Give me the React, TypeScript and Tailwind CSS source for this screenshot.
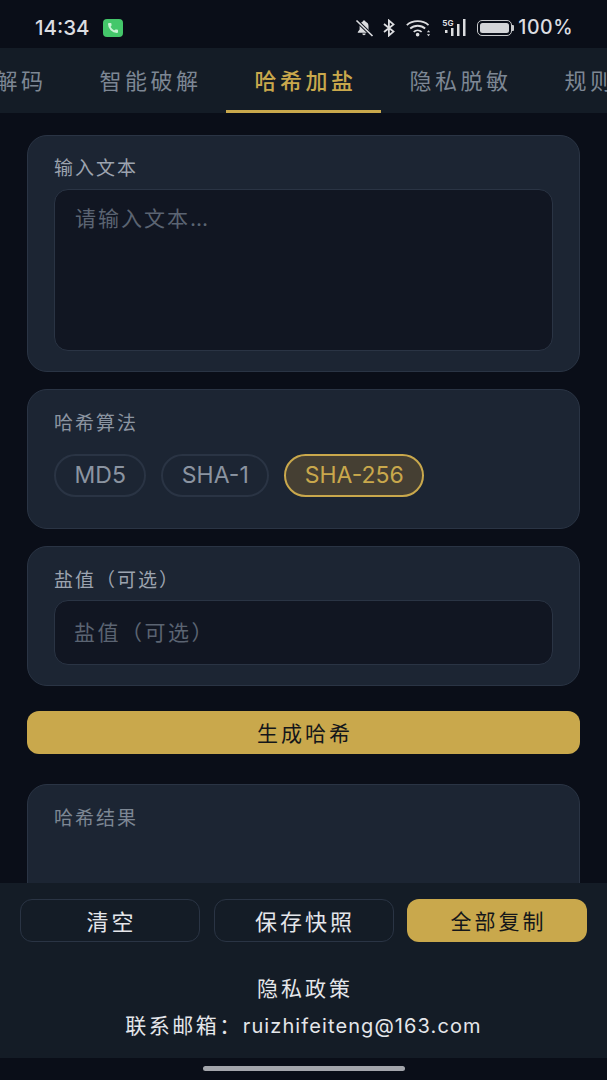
import { Phone } from 'lucide-react';

const FONT = "font-['Inter','Noto_Sans_CJK_SC',sans-serif]";

const tabs = ['编码解码', '智能破解', '哈希加盐', '隐私脱敏', '规则管理'];
const algorithms = ['MD5', 'SHA-1', 'SHA-256'];

function StatusBar() {
  return (
    <div className="h-[48px] shrink-0 flex items-center justify-between pl-[35px] pr-[34px] pt-[8px] text-[#dcdde0]">
      <div className="flex items-center gap-[14px]">
        <span className="text-[20.500px] font-medium leading-none">14:34</span>
        <span className="w-[20px] h-[18px] rounded-[4px] bg-[#44c76a] flex items-center justify-center">
          <Phone size={12} className="text-[#c9f2d4]" fill="currentColor" strokeWidth={0} />
        </span>
      </div>
      <div className="flex items-center">
        {/* muted bell */}
        <svg width="19" height="18" viewBox="0 0 19 18" className="mr-[8px]">
          <path d="M9 1.500c-.8 0-1.300.5-1.400 1.200C5.600 3.300 4.600 5 4.600 7v3.400L2.800 13v.8h12.400V13l-1.700-2.600V7c0-2-1-3.700-2.900-4.300C10.400 2 9.800 1.500 9 1.500zM7.300 14.600c.1 1 .8 1.700 1.700 1.700s1.600-.7 1.700-1.700z" fill="#dcdde0" />
          <path d="M1.500 1.500 17.500 17" stroke="#0a0e18" strokeWidth="3.500" />
          <path d="M1.500 1.500 17.500 17" stroke="#dcdde0" strokeWidth="1.700" />
        </svg>
        {/* bluetooth */}
        <svg width="14" height="18" viewBox="0 0 13 18" className="mr-[9px]" fill="none" stroke="#dcdde0" strokeWidth="1.800">
          <path d="M1.500 5 11 12.600 6.400 16.500V1.500L11 5.400 1.500 13" />
        </svg>
        {/* wifi */}
        <svg width="28" height="18" viewBox="0 0 25 17" className="mr-[9px]" fill="none" stroke="#dcdde0" strokeWidth="1.700">
          <path d="M1 5.800C6.500 .8 16 .8 21.500 5.800" />
          <path d="M4.200 9C8 5.500 14.500 5.500 18.300 9" />
          <path d="M7.500 12.200c2.200-2 5.300-2 7.500 0" />
          <circle cx="11.200" cy="14.800" r="1.700" fill="#dcdde0" stroke="none" />
          <path d="M20 12.500h3l-1.500-1.800zM20 14.500h3L21.500 16.300z" fill="#dcdde0" stroke="none" />
        </svg>
        {/* 5G signal */}
        <div className="relative w-[25px] h-[18px] mr-[10px]">
          <span className="absolute left-0 -top-[1px] text-[8px] font-bold leading-[10px]">5G</span>
          <svg width="25" height="18" viewBox="0 0 25 18" fill="#dcdde0">
            <rect x="3" y="11" width="2.500" height="3" />
            <rect x="9" y="9" width="2.500" height="8" />
            <rect x="15" y="5" width="2.500" height="12" />
            <rect x="21" y="0" width="2.500" height="17" />
          </svg>
        </div>
        {/* battery */}
        <div className="flex items-center mr-[4px]">
          <div className="w-[35px] h-[16px] rounded-[5px] border border-[#c8c9cc] p-[2px]">
            <div className="w-full h-full rounded-[2.500px] bg-[#d4d5d8]" />
          </div>
          <div className="w-[2px] h-[6px] rounded-r-[1px] bg-[#c8c9cc]" />
        </div>
        <span className="text-[19.500px] font-medium leading-none tracking-[0.5px]">100%</span>
      </div>
    </div>
  );
}

function TabBar() {
  return (
    <div className="h-[65px] shrink-0 bg-[#141c26] overflow-hidden flex -ml-[84px] w-[775px]">
      {tabs.map((tab) => {
        const active = tab === '哈希加盐';
        return (
          <div
            key={tab}
            className={`w-[155px] shrink-0 flex items-center justify-center text-[22px] tracking-[3.500px] pl-[4px] pt-[5px] border-b-[3px] ${
              active ? 'border-[#c9a84c] text-[#c9a84c] font-medium' : 'border-transparent text-[#7d8794]'
            }`}
          >
            {tab}
          </div>
        );
      })}
    </div>
  );
}

function Card({ children, className = '' }: { children: React.ReactNode; className?: string }) {
  return (
    <div className={`rounded-[20px] border border-[#2a3444] bg-[#1c2533] px-[26px] ${className}`}>
      {children}
    </div>
  );
}

function BottomBar() {
  return (
    <div className="h-[175px] shrink-0 bg-[#141c26] px-[20px] pt-[16px]">
      <div className="grid grid-cols-3 gap-[13.500px]">
        <button className="h-[43px] rounded-[12px] border border-[#2a3444] pl-[3px] pt-[3px] text-[22px] tracking-[3px] text-[#e4e6ea]">
          清空
        </button>
        <button className="h-[43px] rounded-[12px] border border-[#2a3444] pl-[3px] pt-[3px] text-[22px] tracking-[3px] text-[#e4e6ea]">
          保存快照
        </button>
        <button className="h-[43px] rounded-[12px] bg-[#c9a84c] pl-[3px] pt-[3px] text-[21px] tracking-[3px] text-[#14161a]">
          全部复制
        </button>
      </div>
      <p className="mt-[33px] pl-[3px] text-center text-[21px] leading-[28px] tracking-[3px] text-[#e4e6ea]">隐私政策</p>
      <p className="mt-[9px] text-center text-[20px] leading-[28px] tracking-[1.100px] text-[#e4e6ea]">
        <span className="text-[21px] tracking-[2.500px]">联系邮箱：</span>ruizhifeiteng@163.com
      </p>
    </div>
  );
}

export default function App() {
  return (
    <div className={`h-[1080px] w-[607px] overflow-hidden flex flex-col bg-[#0a0e18] ${FONT}`}>
      <StatusBar />
      <TabBar />

      <div className="flex-1 min-h-0 overflow-hidden px-[27px] pt-[22px] flex flex-col gap-[17px]">
        <Card className="h-[237px] shrink-0 pt-[22px]">
          <p className="text-[19px] leading-[22px] tracking-[2px] text-[#9ca3af]">输入文本</p>
          <div className="mt-[9px] h-[162px] rounded-[14px] border border-[#2a3444] bg-[#111622] px-[20px] py-[16px] text-[21px] leading-[26px] tracking-[2px] text-[#5b6472]">
            请输入文本<span className="tracking-normal">...</span>
          </div>
        </Card>

        <Card className="h-[140px] shrink-0 pt-[23px]">
          <p className="text-[19px] leading-[22px] tracking-[2px] text-[#8b94a1]">哈希算法</p>
          <div className="mt-[19px] flex gap-[15px]">
            {algorithms.map((algo) => {
              const active = algo === 'SHA-256';
              return (
                <span
                  key={algo}
                  className={`h-[43px] px-[18.500px] flex items-center rounded-full border-2 text-[23px] ${
                    active ? 'border-[#c9a84c] bg-[#453f33] text-[#c9a84c]' : 'border-[#2a3444] text-[#8b94a1]'
                  }`}
                >
                  {algo}
                </span>
              );
            })}
          </div>
        </Card>

        <Card className="h-[140px] shrink-0 pt-[23px]">
          <p className="text-[19px] leading-[22px] tracking-[2px] text-[#9ca3af]">盐值（可选）</p>
          <div className="mt-[8px] h-[65px] rounded-[14px] border border-[#2a3444] bg-[#111622] px-[19px] flex items-center text-[21px] tracking-[2.500px] text-[#5b6472]">
            盐值（可选）
          </div>
        </Card>

        <button className="mt-[8px] h-[43px] shrink-0 rounded-[12px] bg-[#c9a84c] pl-[3px] pt-[2px] text-[21px] tracking-[3px] text-[#14161a]">
          生成哈希
        </button>

        <Card className="mt-[13px] h-[200px] shrink-0 pt-[23px]">
          <p className="text-[19px] leading-[22px] tracking-[2px] text-[#7d8794]">哈希结果</p>
        </Card>
      </div>

      <BottomBar />

      <div className="h-[22px] shrink-0 flex justify-center pt-[8px]">
        <div className="w-[202px] h-[5px] rounded-full bg-[#a3a5ab]" />
      </div>
    </div>
  );
}
